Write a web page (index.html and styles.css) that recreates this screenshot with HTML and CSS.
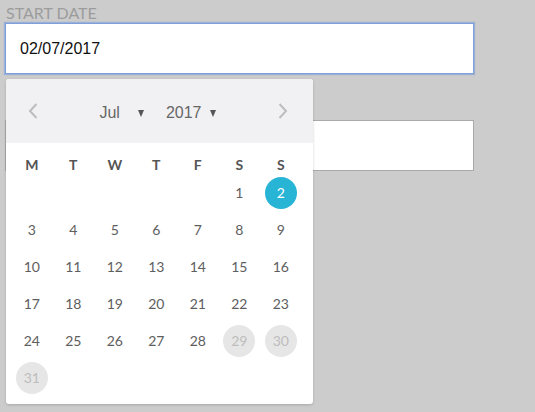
FILE: index.html
```html
<!DOCTYPE html>
<html>
<head>
<meta charset="utf-8">
<link rel="stylesheet" href="styles.css">
</head>
<body>
<div class="form">
  <label class="label">START DATE</label>
  <div class="input focused">02/07/2017</div>
  <label class="label label-second">END DATE</label>
  <div class="input"></div>

  <div class="picker">
    <div class="picker-head">
      <span class="nav">
        <svg width="10" height="16" viewBox="0 0 10 16"><path d="M8.5 1 L2 8 L8.5 15" fill="none" stroke="#bdbdbd" stroke-width="2"/></svg>
      </span>
      <div class="selects">
        <span class="sel sel-month">Jul<span class="caret"></span></span>
        <span class="sel sel-year">2017<span class="caret caret-year"></span></span>
      </div>
      <span class="nav">
        <svg width="10" height="16" viewBox="0 0 10 16"><path d="M1.5 1 L8 8 L1.5 15" fill="none" stroke="#bdbdbd" stroke-width="2"/></svg>
      </span>
    </div>
    <div class="weekdays">
      <span>M</span><span>T</span><span>W</span><span>T</span><span>F</span><span>S</span><span>S</span>
    </div>
    <div class="days">
      <span class="day"></span><span class="day"></span><span class="day"></span><span class="day"></span><span class="day"></span>
      <span class="day"><i>1</i></span><span class="day"><i class="selected">2</i></span>
      <span class="day"><i>3</i></span><span class="day"><i>4</i></span><span class="day"><i>5</i></span><span class="day"><i>6</i></span><span class="day"><i>7</i></span><span class="day"><i>8</i></span><span class="day"><i>9</i></span>
      <span class="day"><i>10</i></span><span class="day"><i>11</i></span><span class="day"><i>12</i></span><span class="day"><i>13</i></span><span class="day"><i>14</i></span><span class="day"><i>15</i></span><span class="day"><i>16</i></span>
      <span class="day"><i>17</i></span><span class="day"><i>18</i></span><span class="day"><i>19</i></span><span class="day"><i>20</i></span><span class="day"><i>21</i></span><span class="day"><i>22</i></span><span class="day"><i>23</i></span>
      <span class="day"><i>24</i></span><span class="day"><i>25</i></span><span class="day"><i>26</i></span><span class="day"><i>27</i></span><span class="day"><i>28</i></span><span class="day"><i class="disabled">29</i></span><span class="day"><i class="disabled">30</i></span>
      <span class="day"><i class="disabled">31</i></span>
    </div>
  </div>
</div>
</body>
</html>
```
FILE: styles.css
```css
html, body {
  margin: 0;
  padding: 0;
  background: #cccccc;
  width: 535px;
  height: 412px;
  overflow: hidden;
}

.form {
  position: relative;
  padding: 3px 0 0 5px;
  width: 469px;
}

.label {
  display: block;
  font-family: Lato, "Liberation Sans", sans-serif;
  font-size: 16px;
  line-height: 20px;
  color: #9c9c9c;
  padding-left: 1px;
}

.label-second {
  margin-top: 26px;
}

.input {
  box-sizing: border-box;
  width: 469px;
  height: 51px;
  background: #fff;
  border: 1px solid #a9a9a9;
  padding-left: 14px;
  font-family: "Liberation Sans", Arial, sans-serif;
  font-size: 16px;
  line-height: 49px;
  color: #111;
}

.input.focused {
  border-color: #7d9fdb;
  box-shadow: 0 0 1px 1px rgba(125, 159, 219, 0.6);
}

.picker {
  position: absolute;
  left: 6px;
  top: 79px;
  width: 307px;
  height: 325px;
  background: #fff;
  border-radius: 3px;
  box-shadow: 0 1px 3px rgba(0, 0, 0, 0.18);
  overflow: hidden;
}

.picker-head {
  height: 64px;
  background: #f1f1f3;
  display: flex;
  align-items: center;
  justify-content: space-between;
  padding: 0 25px 0 22px;
}

.nav {
  display: flex;
  width: 10px;
  height: 16px;
}

.selects {
  display: flex;
  align-items: center;
  margin-left: -1px;
  padding-top: 4px;
  font-family: "Liberation Sans", Arial, sans-serif;
  font-size: 16px;
  color: #666;
}

.sel {
  display: flex;
  align-items: center;
}

.sel-year {
  margin-left: 22px;
}

.caret {
  width: 0;
  height: 0;
  border-left: 3.5px solid transparent;
  border-right: 3.5px solid transparent;
  border-top: 7px solid #555;
  margin-left: 18px;
  margin-top: 1px;
}

.caret-year {
  margin-left: 8px;
}

.weekdays,
.days {
  display: grid;
  grid-template-columns: repeat(7, 41.5px);
  margin-left: 5px;
  font-family: Lato, "Liberation Sans", sans-serif;
}

.weekdays {
  margin-top: 12px;
  height: 20px;
  line-height: 20px;
  font-size: 14px;
  font-weight: 700;
  color: #555;
  text-align: center;
}

.days {
  grid-auto-rows: 37px;
  margin-top: -1px;
  font-size: 14px;
  color: #5e5e5e;
}

.day {
  display: flex;
  align-items: center;
  justify-content: center;
}

.day i {
  font-style: normal;
  width: 32px;
  height: 32px;
  border-radius: 50%;
  display: flex;
  align-items: center;
  justify-content: center;
}

.day i.selected {
  background: #27b4d5;
  color: #fff;
}

.day i.disabled {
  background: #e6e6e6;
  color: #bdbdbd;
}
```
